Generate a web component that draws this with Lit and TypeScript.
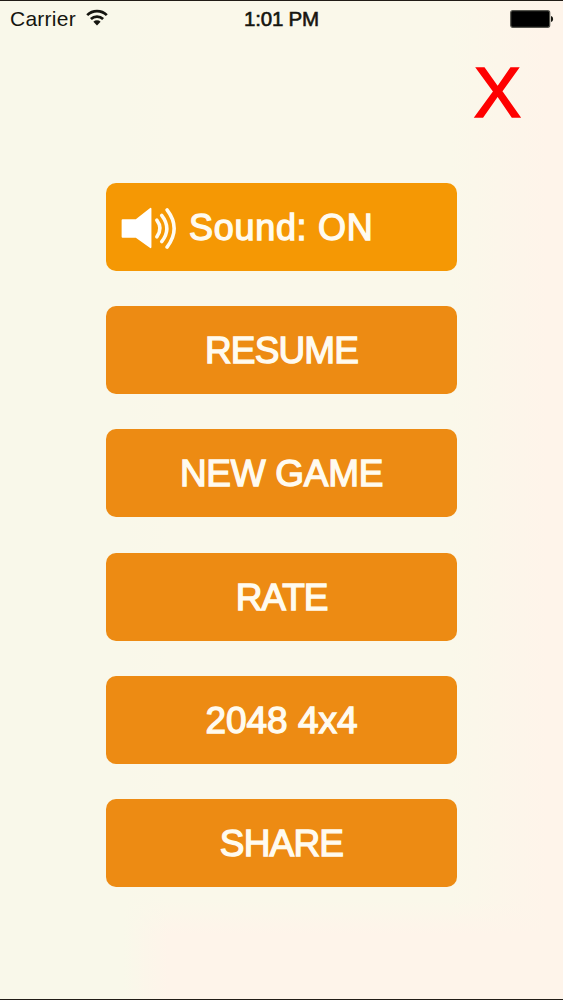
import { LitElement, html, css } from "lit";
import { customElement } from "lit/decorators.js";

@customElement("app-root")
export class AppRoot extends LitElement {
  static styles = css`
    :host {
      display: flex;
      flex-direction: column;
      box-sizing: border-box;
      width: 563px;
      height: 1000px;
      overflow: hidden;
      border-top: 1px solid #211c16;
      border-bottom: 1px solid #211c16;
      background:
        linear-gradient(90deg, #f9f8ea 0 22%, rgba(250, 248, 234, 0) 30%),
        linear-gradient(180deg, rgba(254, 244, 234, 0) 90%, #fef4ea 93.5%),
        linear-gradient(90deg, #faf8ea 0 80%, #fef4ea 97%);
      font-family: "Liberation Sans", Arial, sans-serif;
    }
    .status {
      display: grid;
      grid-template-columns: 1fr auto 1fr;
      align-items: center;
      height: 36px;
      padding: 0 10px 0 10px;
      font-size: 21px;
      line-height: 36px;
      color: #15150f;
    }
    .left { display: flex; align-items: center; gap: 10px; letter-spacing: 0.25px; }
    .wifi { margin-top: -3px; }
    .time {
      font-size: 20.5px;
      letter-spacing: -0.2px;
      -webkit-text-stroke: 0.6px #15150f;
    }
    .battery { justify-self: end; margin-right: -1px; }
    svg { display: block; }
    .top {
      display: flex;
      justify-content: flex-end;
      padding: 15px 42px 0 0;
    }
    button {
      border: 0;
      padding: 0;
      margin: 0;
      font-family: inherit;
    }
    .close {
      background: none;
      color: #fe0000;
      font-size: 71px;
      line-height: 82px;
      -webkit-text-stroke: 1.6px #fe0000;
    }
    .menu {
      display: flex;
      flex-direction: column;
      align-items: center;
      gap: 35.2px;
      padding: 49px 0 0;
    }
    .item {
      display: flex;
      align-items: center;
      justify-content: center;
      box-sizing: border-box;
      width: 351px;
      height: 88px;
      padding-top: 2px;
      border-radius: 10px;
      background: #ed8b13;
      color: #fffbf0;
      font-size: 37px;
      line-height: 86px;
      white-space: pre;
      -webkit-text-stroke: 1.3px #fffbf0;
    }
    .sound {
      justify-content: flex-start;
      gap: 13px;
      padding-left: 15px;
      background: #f59804;
      font-size: 36px;
      letter-spacing: 0.7px;
    }
    .resume { letter-spacing: -0.9px; }
    .new-game { letter-spacing: -0.3px; }
    .rate { letter-spacing: -1.1px; }
    .share { letter-spacing: -0.8px; }
  `;

  private items = [
    ["resume", "RESUME"],
    ["new-game", "NEW GAME"],
    ["rate", "RATE"],
    ["size", "2048 4x4"],
    ["share", "SHARE"],
  ];

  render() {
    return html`
      <div class="status">
        <div class="left">
          <span>Carrier</span>
          <svg class="wifi" width="22" height="17" viewBox="0 0 22 17" fill="none" stroke="#15150f" stroke-width="2.7">
            <path d="M1.2 6.1a14 14 0 0 1 19.6 0" />
            <path d="M4.9 10a8.8 8.8 0 0 1 12.2 0" />
            <path d="M11 16.4 7.4 12.8a5.2 5.2 0 0 1 7.2 0z" fill="#15150f" stroke="none" />
          </svg>
        </div>
        <span class="time">1:01 PM</span>
        <svg class="battery" width="44" height="18" viewBox="0 0 44 18">
          <rect x="0.7" y="0.7" width="39" height="16.6" rx="2" fill="#000" stroke="#55554e" stroke-width="1.2" />
          <path d="M41 6C43.800 6.500 43.800 11.500 41 12z" fill="#15150f" />
        </svg>
      </div>
      <div class="top"><button class="close">X</button></div>
      <div class="menu">
        <button class="item sound">
          <svg width="55" height="43" viewBox="0 0 56 44">
            <path d="M1.500 12.500H15L29 1.500Q31 0 31 2V41Q31 43 29 41.500L15 31.500H1.500Q.5 31.500 .5 30.500V13.500Q.5 12.500 1.500 12.500z" fill="#fff" />
            <g fill="none" stroke="#fffbf0" stroke-width="3.600" stroke-linecap="round">
              <path d="M36.500 13.500q6.500 8.500 0 17" />
              <path d="M41.500 8.500q10.500 13.500 0 27" />
              <path d="M47 3q14.500 19 0 38" />
            </g>
          </svg>
          <span>Sound: ON</span>
        </button>
        ${this.items.map(([id, label]) => html`<button class="item ${id}">${label}</button>`)}
      </div>
    `;
  }
}
